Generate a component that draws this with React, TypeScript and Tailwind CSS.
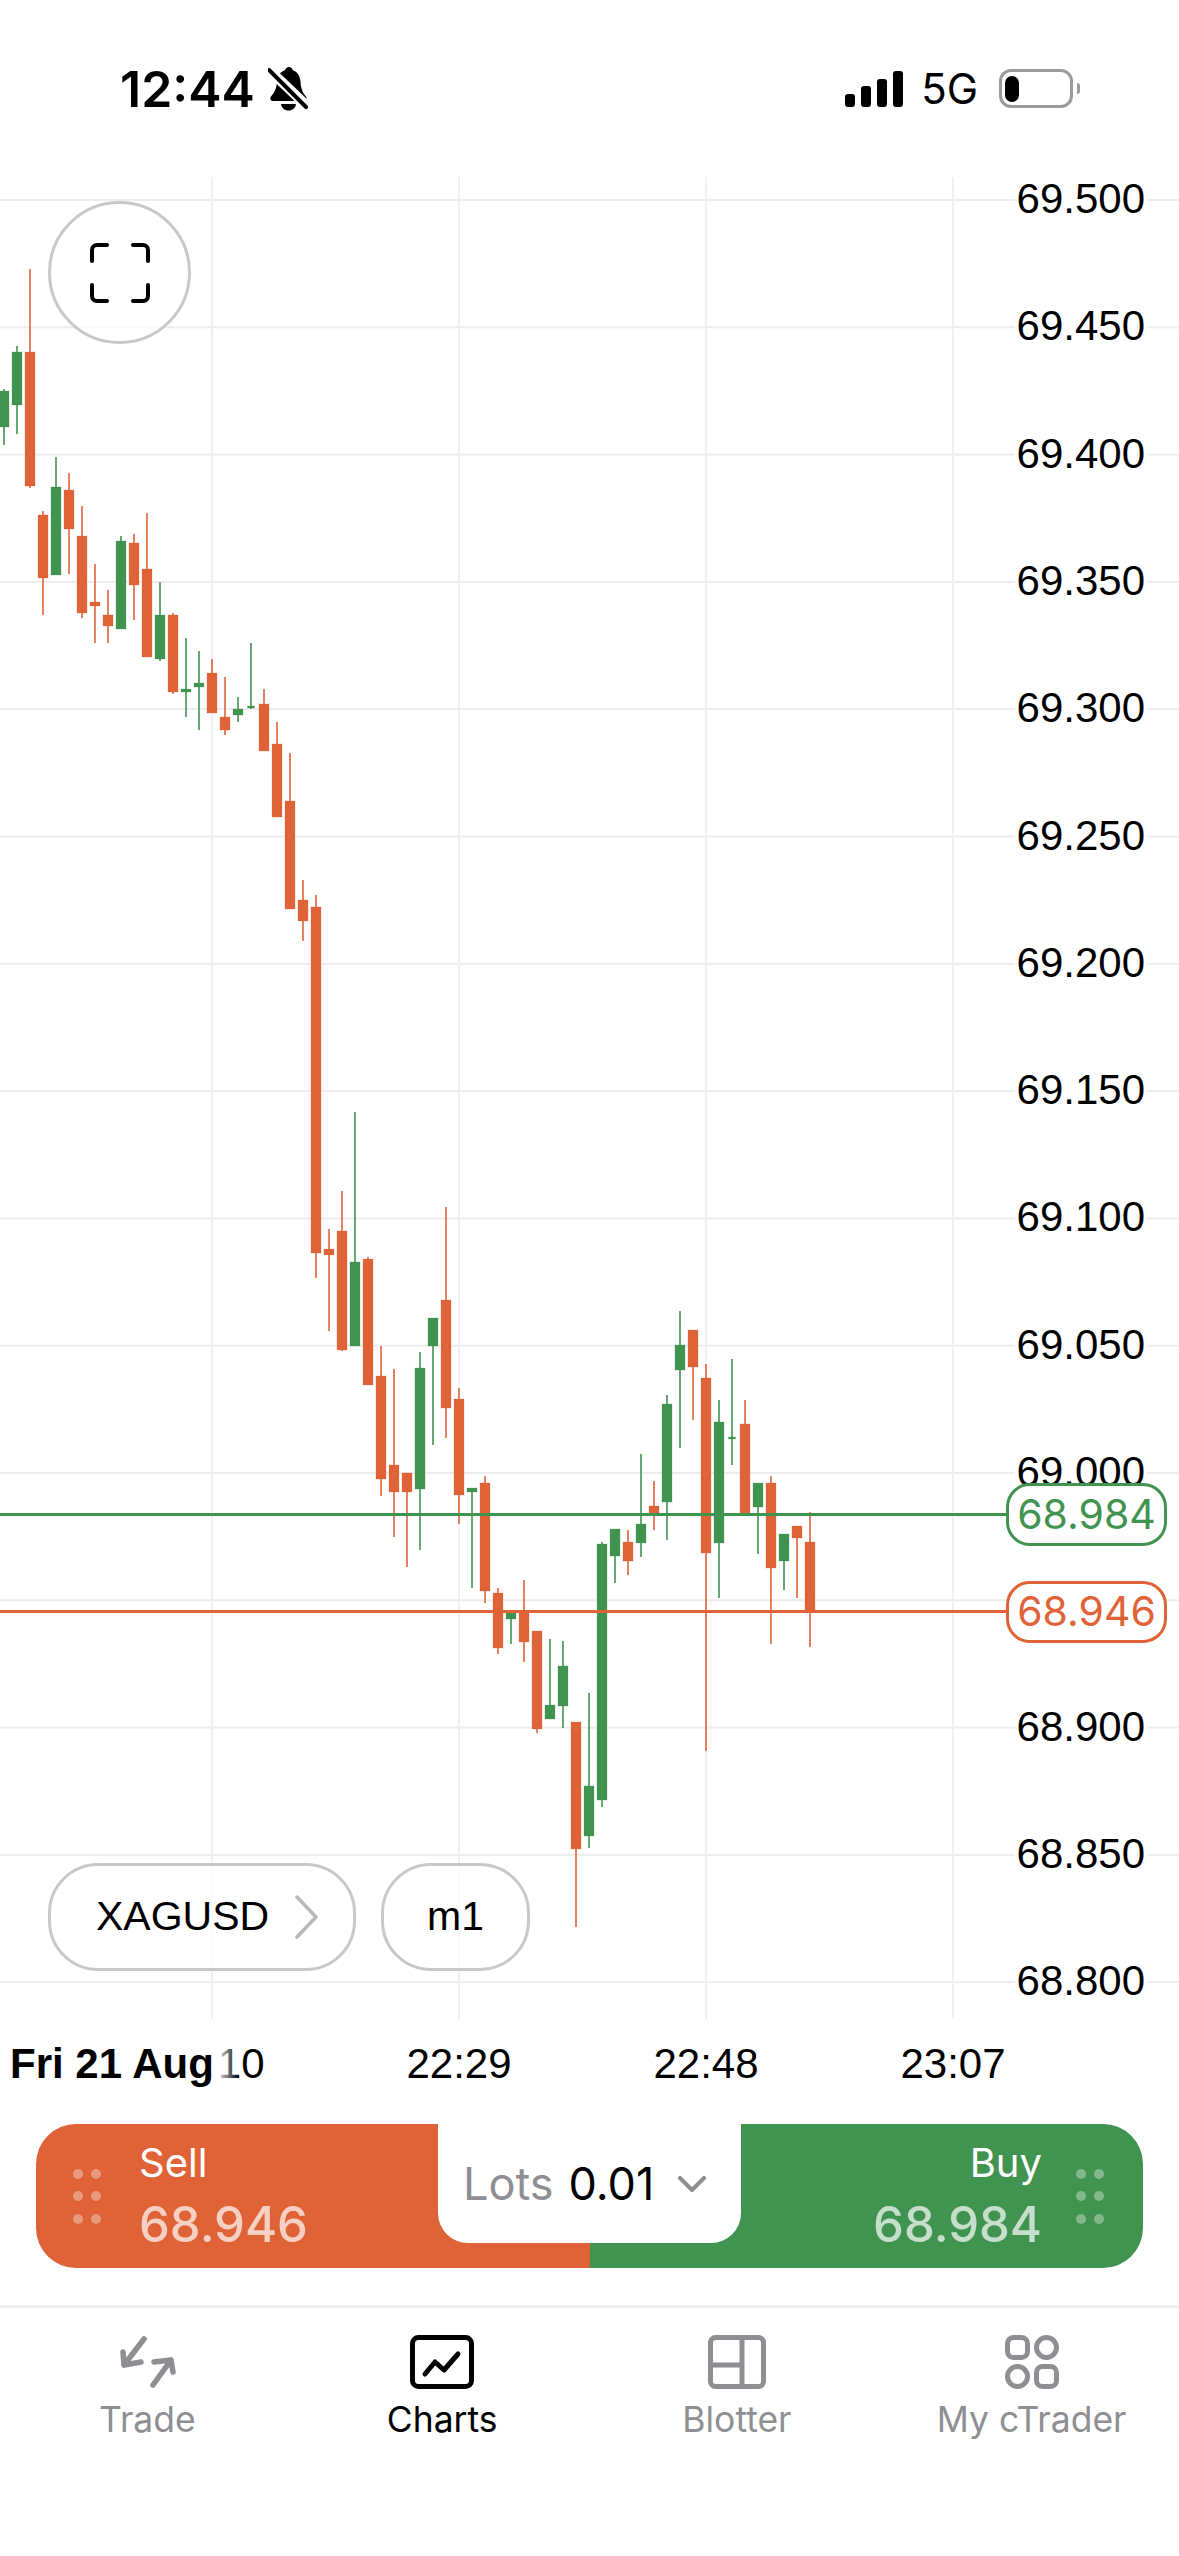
const RED = "#e06337";
const GREEN = "#419350";

// x = 4 + 13 * index; [green?, wick top, body top, body bottom, wick bottom, body width]
type Candle = [number, number, number, number, number, number?];

const candles: Candle[] = [
  [1, 389, 391, 427, 445],
  [1, 346, 352, 405, 434],
  [0, 269, 352, 486, 488],
  [0, 511, 515, 578, 615],
  [1, 457, 487, 575, 575],
  [0, 473, 490, 529, 574],
  [0, 506, 536, 613, 618],
  [0, 564, 602, 606, 643],
  [0, 590, 615, 626, 643],
  [1, 536, 541, 629, 629],
  [0, 534, 543, 585, 620],
  [0, 513, 569, 657, 657],
  [1, 582, 615, 659, 661],
  [0, 613, 615, 692, 694],
  [1, 638, 689, 692, 717],
  [1, 651, 683, 687, 730],
  [0, 659, 673, 713, 713],
  [0, 677, 717, 730, 735],
  [1, 697, 709, 715, 722],
  [1, 643, 706, 708, 709, 7],
  [0, 689, 704, 751, 751],
  [0, 722, 744, 817, 817],
  [0, 753, 801, 909, 909],
  [0, 880, 900, 921, 941],
  [0, 895, 907, 1253, 1278],
  [0, 1229, 1249, 1255, 1331],
  [0, 1191, 1231, 1350, 1351],
  [1, 1112, 1262, 1346, 1346],
  [0, 1257, 1259, 1385, 1385],
  [0, 1346, 1376, 1479, 1496],
  [0, 1369, 1465, 1492, 1537],
  [0, 1473, 1473, 1492, 1567],
  [1, 1352, 1368, 1489, 1550],
  [1, 1318, 1318, 1346, 1445],
  [0, 1207, 1300, 1408, 1438],
  [0, 1388, 1399, 1495, 1524],
  [1, 1488, 1488, 1492, 1588],
  [0, 1476, 1483, 1591, 1603],
  [0, 1588, 1593, 1648, 1654],
  [1, 1611, 1611, 1619, 1644],
  [0, 1580, 1611, 1642, 1662],
  [0, 1631, 1631, 1729, 1733],
  [1, 1639, 1705, 1719, 1719],
  [1, 1641, 1666, 1706, 1728],
  [0, 1722, 1722, 1849, 1927],
  [1, 1693, 1786, 1836, 1848],
  [1, 1542, 1544, 1800, 1807],
  [1, 1529, 1529, 1556, 1583],
  [0, 1530, 1542, 1561, 1575],
  [1, 1454, 1524, 1543, 1557],
  [0, 1481, 1506, 1515, 1530],
  [1, 1395, 1404, 1502, 1540],
  [1, 1311, 1345, 1370, 1448],
  [0, 1330, 1330, 1367, 1420],
  [0, 1364, 1378, 1553, 1751],
  [1, 1400, 1422, 1543, 1598],
  [1, 1359, 1437, 1439, 1465, 7],
  [0, 1400, 1424, 1514, 1514],
  [1, 1483, 1483, 1507, 1554],
  [0, 1476, 1483, 1568, 1644],
  [1, 1534, 1534, 1561, 1590],
  [0, 1526, 1526, 1538, 1598],
  [0, 1512, 1542, 1611, 1647],
];

const prices = [
  "69.500", "69.450", "69.400", "69.350", "69.300", "69.250", "69.200", "69.150",
  "69.100", "69.050", "69.000", "68.950", "68.900", "68.850", "68.800",
];

const gridY = (i: number) => 200 + i * 127.3;
const gridX = [212, 459, 706, 953];

function Chart() {
  return (
    <svg viewBox="0 177 1179 1842" className="absolute inset-0 h-full w-full">
      {prices.map((p, i) => (
        <rect key={p} x="0" y={gridY(i) - 1} width="1179" height="2" fill="#ededed" />
      ))}
      {gridX.map((x) => (
        <rect key={x} x={x - 1} y="177" width="2" height="1842" fill="#f0f0f0" />
      ))}
      {candles.map(([green, wickTop, top, bottom, wickBottom, width = 10], i) => {
        const x = 4 + 13 * i;
        const color = green ? GREEN : RED;
        return (
          <g key={i}>
            <rect x={x - 1} y={wickTop} width="2" height={wickBottom - wickTop} fill={color} opacity="0.8" />
            <rect
              x={x - width / 2}
              y={top}
              width={width}
              height={bottom - top}
              fill={color}
              stroke={color}
              strokeOpacity="0.25"
              strokeWidth="1"
            />
          </g>
        );
      })}
      <rect x="0" y="1513" width="1010" height="3" fill={GREEN} />
      <rect x="0" y="1610" width="1010" height="3" fill={RED} />
    </svg>
  );
}

function BellOff() {
  return (
    <svg viewBox="0 0 40 44" className="ml-[13px] h-[44px] w-[40px]">
      <path
        d="M21 0c2 0 3.500 1.500 3.800 3.300C30 5 32 9.500 32.500 15c.5 6 1.500 10 5.500 14.500 1.500 2 .5 4.500-2 4.500H5c-2.500 0-3.500-2.500-2-4.500C7 25 8.500 21 9 15c.5-5.500 2.500-10 8-11.700C17.500 1.500 19 0 21 0z"
        fill="#000"
      />
      <path d="M13 37h15c-.5 4-3.500 6.500-7.500 6.500S13.500 41 13 37z" fill="#000" />
      <path d="M-2 0 40 40" stroke="#fff" strokeWidth="10" />
      <path d="M1 3 38 40" stroke="#000" strokeWidth="4" strokeLinecap="round" />
    </svg>
  );
}

function StatusBar() {
  return (
    <div className="flex h-[177px] items-center justify-between pr-[99px] pl-[120px]">
      <div className="flex items-center">
        <span className="text-[50px] leading-none font-semibold text-black">12:44</span>
        <BellOff />
      </div>
      <div className="flex items-center">
        <div className="flex h-[36px] items-end gap-[6px]">
          <div className="h-[13px] w-[10px] rounded-[3px] bg-black" />
          <div className="h-[21px] w-[10px] rounded-[3px] bg-black" />
          <div className="h-[28px] w-[10px] rounded-[3px] bg-black" />
          <div className="h-[36px] w-[10px] rounded-[3px] bg-black" />
        </div>
        <span className="ml-[18px] text-[42px] leading-none text-black">5G</span>
        <div className="ml-[21px] flex h-[39px] w-[74px] items-center rounded-[12px] border-[3px] border-[#9b9b9b] pl-[3px]">
          <div className="h-[26px] w-[14px] rounded-[7px] bg-black" />
        </div>
        <div className="ml-[4px] h-[11px] w-[3px] rounded-r-[3px] bg-[#9b9b9b]" />
      </div>
    </div>
  );
}

function ChartArea() {
  return (
    <div className="relative h-[1842px]">
      <Chart />
      {prices.map((p, i) => (
        <div
          key={p}
          className="absolute right-[32px] bg-white px-[2px] font-['Liberation_Sans',sans-serif] text-[42px] leading-[36px] text-black"
          style={{ top: gridY(i) - 177 - 19 }}
        >
          {p}
        </div>
      ))}
      <div className="absolute top-[24px] left-[48px] flex h-[143px] w-[143px] items-center justify-center rounded-full border-[3px] border-[#c8c8c8] bg-white/70">
        <svg viewBox="0 0 60 60" fill="none" stroke="#000" strokeWidth="4" strokeLinecap="round" className="h-[60px] w-[60px]">
          <path d="M2 18V7a5 5 0 0 1 5-5h10" />
          <path d="M43 2h10a5 5 0 0 1 5 5v11" />
          <path d="M2 42v11a5 5 0 0 0 5 5h10" />
          <path d="M58 42v11a5 5 0 0 1-5 5H43" />
        </svg>
      </div>
      <div className="absolute top-[1686px] left-[48px] flex items-center gap-[25px] font-['Liberation_Sans',sans-serif] text-[41px] text-black">
        <div className="flex h-[108px] w-[308px] items-center rounded-[50px] border-[3px] border-[#c8c8c8] bg-white/70 pl-[45px]">
          <span>XAGUSD</span>
          <svg viewBox="0 0 24 44" fill="none" stroke="#b8b8b8" strokeWidth="3.500" strokeLinecap="round" strokeLinejoin="round" className="ml-[25px] h-[44px] w-[24px]">
            <path d="M3 2 22 22 3 42" />
          </svg>
        </div>
        <div className="flex h-[108px] w-[149px] items-center justify-center rounded-[50px] border-[3px] border-[#c8c8c8] bg-white/70">
          m1
        </div>
      </div>
      <div className="absolute top-[1306px] left-[1006px] flex h-[63px] w-[161px] items-center justify-center rounded-[24px] border-[3px] border-[#419350] bg-white text-[41px] text-[#419350]">
        68.984
      </div>
      <div className="absolute top-[1404px] left-[1006px] flex h-[62px] w-[161px] items-center justify-center rounded-[24px] border-[3px] border-[#e06337] bg-white text-[41px] text-[#e06337]">
        68.946
      </div>
    </div>
  );
}

function TimeAxis() {
  return (
    <div className="relative h-[105px] font-['Liberation_Sans',sans-serif] text-[42px] leading-[48px] text-black">
      {[
        ["22:10", 212],
        ["22:29", 459],
        ["22:48", 706],
        ["23:07", 953],
      ].map(([label, x]) => (
        <span key={label} className="absolute top-[21px] -translate-x-1/2" style={{ left: x }}>
          {label}
        </span>
      ))}
      <div className="absolute top-[21px] left-0 flex">
        <span className="bg-white pr-px pl-[10px] font-bold">Fri 21 Aug</span>
        <div className="w-[24px] bg-linear-to-r from-white to-transparent" />
      </div>
    </div>
  );
}

function Dots() {
  return (
    <div className="grid grid-cols-2 gap-x-[8px] gap-y-[12.500px]">
      {[0, 1, 2, 3, 4, 5].map((d) => (
        <div key={d} className="h-[10px] w-[10px] rounded-full bg-white/35" />
      ))}
    </div>
  );
}

function TradeBar() {
  return (
    <div className="relative mx-[36px] flex h-[144px] overflow-hidden rounded-[40px] text-white">
      <div className="flex w-[554px] items-center bg-[#e06337] pl-[37px]">
        <Dots />
        <div className="ml-[38px]">
          <div className="text-[40px] leading-[40px]">Sell</div>
          <div className="mt-[18px] text-[49px] leading-[48px] font-medium text-white/70">68.946</div>
        </div>
      </div>
      <div className="flex flex-1 items-center justify-end bg-[#419350] pr-[39px]">
        <div className="mr-[34px] text-right">
          <div className="text-[40px] leading-[40px]">Buy</div>
          <div className="mt-[18px] text-[49px] leading-[48px] font-medium text-white/70">68.984</div>
        </div>
        <Dots />
      </div>
      <div className="absolute top-0 left-[402px] flex h-[119px] w-[303px] items-center rounded-b-[30px] bg-white pl-[25px] text-[45px]">
        <span className="text-[#8e8e93]">Lots</span>
        <span className="ml-[15px] text-black">0.01</span>
        <svg viewBox="0 0 28 16" fill="none" stroke="#8e8e93" strokeWidth="4" strokeLinecap="round" strokeLinejoin="round" className="ml-[24px] h-[16px] w-[28px]">
          <path d="M2 2 14 14 26 2" />
        </svg>
      </div>
    </div>
  );
}

const tabs = [
  {
    label: "Trade",
    icon: (
      <svg viewBox="0 0 60 58" fill="none" stroke="#8e8e93" strokeWidth="5.500" strokeLinecap="round" strokeLinejoin="round" className="h-[58px] w-[60px]">
        <path d="M27 6 7 32M6 19 7 32 24 29" />
        <path d="M36 52 54 27M37 29 54 27 56 39" />
      </svg>
    ),
  },
  {
    label: "Charts",
    active: true,
    icon: (
      <svg viewBox="0 0 64 54" fill="none" stroke="#000" strokeWidth="5" strokeLinecap="round" strokeLinejoin="round" className="h-[54px] w-[64px]">
        <rect x="2.500" y="2.500" width="59" height="49" rx="6" />
        <path d="M15 39 25 27 34 35 48 19" />
      </svg>
    ),
  },
  {
    label: "Blotter",
    icon: (
      <svg viewBox="0 0 58 54" fill="none" stroke="#8e8e93" strokeWidth="5" className="h-[54px] w-[58px]">
        <rect x="2.500" y="2.500" width="53" height="49" rx="5" />
        <path d="M34 2.500V51.500M2.500 30H34" />
      </svg>
    ),
  },
  {
    label: "My cTrader",
    icon: (
      <svg viewBox="0 0 54 54" fill="none" stroke="#8e8e93" strokeWidth="5" className="h-[54px] w-[54px]">
        <rect x="2.500" y="2.500" width="20" height="20" rx="6" />
        <circle cx="41.500" cy="12.500" r="10" />
        <circle cx="12.500" cy="41.500" r="10" />
        <rect x="31.500" y="31.500" width="20" height="20" rx="6" />
      </svg>
    ),
  },
];

function TabBar() {
  return (
    <div className="mt-[37px] grid grid-cols-4 border-t-[3px] border-[#eeeeee] pt-[26px]">
      {tabs.map((tab) => (
        <div key={tab.label} className="flex flex-col items-center">
          <div className="flex h-[56px] items-center justify-center">{tab.icon}</div>
          <span className={`mt-[10px] text-[35.500px] leading-[40px] ${tab.active ? "text-black" : "text-[#8e8e93]"}`}>
            {tab.label}
          </span>
        </div>
      ))}
    </div>
  );
}

export default function App() {
  return (
    <div className="min-h-[2556px] w-[1179px] overflow-hidden bg-white font-[Inter,sans-serif]">
      <StatusBar />
      <ChartArea />
      <TimeAxis />
      <TradeBar />
      <TabBar />
    </div>
  );
}
